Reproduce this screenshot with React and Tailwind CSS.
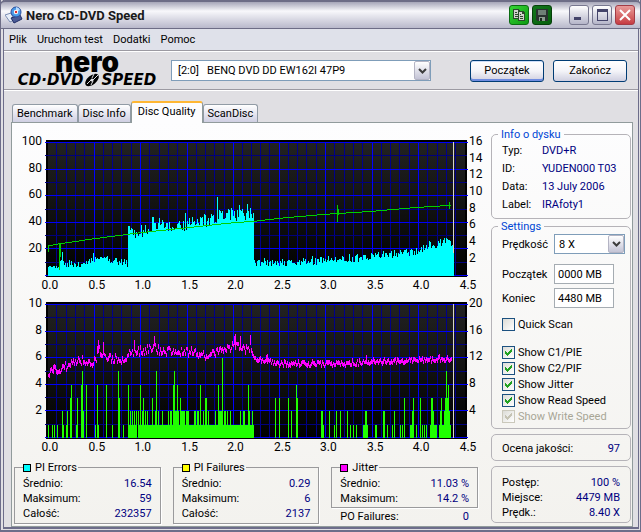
import React, { useState } from 'react';

const PLOT = { left: 36, top: 10, width: 419, height: 134 };
const BASE = PLOT.top + PLOT.height;
const X_LABELS = ['0.0', '0.5', '1.0', '1.5', '2.0', '2.5', '3.0', '3.5', '4.0', '4.5'];

// [x, height] control points, all in chart pixels
const PIE_SHAPE = [
    [36, 9], [50, 11], [70, 12], [85, 16], [100, 15], [115, 12], [116, 43], [130, 43], [148, 52],
    [160, 47], [185, 53], [205, 56], [220, 60], [235, 59], [242, 58], [243, 13], [280, 13],
    [320, 15], [345, 17], [370, 20], [400, 23], [415, 27], [434, 34], [441, 31], [442, 23],
];
const PIE_PEAKS = {
    50: 24, 81: 23, 116: 50, 140: 59, 141: 59, 147: 58, 173: 63, 189: 58, 205: 79, 207: 66, 208: 65,
    216: 67, 217: 66, 219: 68, 227: 71, 228: 66, 235: 72, 239: 68, 240: 62, 301: 20, 338: 22, 418: 35,
    419: 34, 432: 36, 433: 38, 435: 38, 437: 36, 439: 35,
};

// [x, y]
const JITTER_SHAPE = [
    [36, 82], [42, 76], [48, 75], [58, 70], [72, 66], [80, 69], [84, 67], [86, 56], [93, 64],
    [103, 65], [113, 66], [118, 58], [132, 57], [141, 52], [148, 58], [175, 58], [195, 62],
    [208, 57], [223, 51], [230, 54], [236, 57], [239, 52], [242, 64], [253, 66], [266, 70],
    [318, 70], [361, 68], [408, 66], [440, 65],
];
const JITTER_TOPS = { 41: 71, 61: 64, 85: 52, 86: 46, 91: 48, 122: 46, 142: 42, 222: 42, 223: 40, 228: 42, 238: 42, 239: 41, 255: 61, 256: 60, 355: 61 };

const PIF_BARS = {
    36: 1, 40: 1, 42: 1, 45: 1, 50: 2, 51: 1, 54: 1, 55: 2, 58: 3, 59: 4, 64: 1, 65: 3, 69: 4, 70: 5,
    71: 2, 74: 4, 83: 1, 85: 4, 86: 1, 94: 4, 100: 1, 106: 5, 107: 3, 111: 1, 116: 4, 128: 4, 131: 3,
    140: 3, 144: 5, 161: 4, 162: 5, 165: 4, 168: 3, 188: 4, 193: 3, 194: 3, 206: 4, 210: 6, 236: 4,
    264: 3, 268: 3, 277: 3, 280: 2, 285: 4, 286: 3, 310: 2, 311: 2, 312: 1, 318: 2, 323: 1, 325: 2,
    329: 2, 336: 2, 339: 1, 342: 1, 345: 1, 352: 1, 353: 1, 354: 2, 355: 2, 356: 1, 364: 1, 365: 1,
    372: 2, 373: 2, 376: 1, 381: 1, 383: 2, 389: 1, 391: 1, 393: 3, 399: 1, 400: 1, 401: 2, 402: 3,
    405: 1, 409: 3, 411: 1, 413: 1, 415: 1, 419: 1, 420: 3, 421: 3, 422: 2, 423: 1, 424: 1, 425: 1,
    428: 1, 429: 2, 430: 3, 431: 1, 432: 1, 433: 2, 434: 3, 435: 5, 436: 3, 437: 4, 438: 2, 439: 1,
};

const noise = (n) => {
    const v = Math.sin(n * 127.1 + 11.7) * 43758.5453;
    return v - Math.floor(v);
};

const lerp = (shape, x) => {
    const i = shape.findIndex(([px]) => px >= x);
    if (i <= 0) return shape[0][1];
    const [x0, y0] = shape[i - 1];
    const [x1, y1] = shape[i];
    return y0 + ((y1 - y0) * (x - x0)) / (x1 - x0);
};

const range = (from, to) => Array.from({ length: to - from }, (_, i) => from + i);

const barsPath = (bars) => bars.map(([x, h]) => `M${x} ${BASE}v${-Math.round(h)}h1v${Math.round(h)}z`).join('');

const pieBars = range(36, 443).map((x) => {
    const dense = x >= 116 && x < 243;
    const spread = dense ? 13 : 8;
    return [x, PIE_PEAKS[x] || lerp(PIE_SHAPE, x) + (noise(x) - 0.4) * (x > 440 ? 0 : spread)];
});

const pifBars = range(36, 443).map((x) => {
    let v = PIF_BARS[x] || 0;
    if (!v && x >= 116 && x < 243 && x !== 125) v = noise(x * 3) > 0.62 ? 2 : 1;
    return [x, v * 13.3];
});

const jitterPath = range(36, 441).map((x) => {
    const spread = x < 242 ? 8 : 5;
    const mid = lerp(JITTER_SHAPE, x) + (noise(x + 500) - 0.5) * spread;
    const top = Math.round(JITTER_TOPS[x] || mid - 1 - noise(x + 900) * 2);
    return `M${x} ${top}h1V${Math.round(mid + 2)}h-1z`;
}).join('');

const Chart = ({ id, title, left, right, children }) => (
    <svg viewBox="0 0 476 162" className="block w-full" role="img" aria-label={title} shapeRendering="crispEdges">
        <defs>
            <linearGradient id={id} x1="0" y1="0" x2="0" y2="1">
                <stop offset="0" stopColor="#222222" />
                <stop offset="1" stopColor="#000000" />
            </linearGradient>
        </defs>
        <rect x="34" y="8" width="422" height="137" fill="#000000" />
        <rect x="36" y="10" width="418" height="134" fill={`url(#${id})`} />

        {range(1, 45).map((i) => i % 5 !== 0 && (
            <rect key={i} x={Math.round(35 + i * 9.3)} y="10" width="1" height="134" fill="#00008b" />
        ))}
        {range(0, 11).map((i) => (
            <rect key={i} x="33" y={Math.round(10 + i * 13.3)} width={i % 2 ? 423 : 424} height="1" fill={i % 2 ? '#00007c' : '#0000f8'} />
        ))}
        {range(1, 9).map((i) => (
            <rect key={i} x={Math.round(35 + i * 46.5)} y="10" width="1" height="134" fill="#0000ff" />
        ))}
        <rect x="442" y="10" width="1" height="134" fill="#d8d4c8" />
        {children}

        <g className="font-[Roboto,sans-serif] text-[12px]" fill="#000000" shapeRendering="auto">
            {left.map((t, i) => (
                <text key={t} x="30" y={Math.round(13 + i * 26.7)} textAnchor="end">{t}</text>
            ))}
            {right.map((t, i) => (
                <text key={t} x="458" y={Math.round(13 + (i * 133.5) / right.length)}>{t}</text>
            ))}
            {X_LABELS.map((t, i) => (
                <text key={t} x={Math.round(38 + i * 46.5)} y="157" textAnchor="middle">{t}</text>
            ))}
        </g>
    </svg>
);

const GroupBox = ({ legend, className, children }) => (
    <fieldset className={`min-w-0 rounded-[5px] border border-[#b5b3b8] ${className}`}>
        {legend && <legend className="-ml-1 px-[3px] text-[#0046d5]">{legend}</legend>}
        {children}
    </fieldset>
);

const Row = ({ label, value }) => (
    <div className="flex justify-between">
        <dt>{label}</dt>
        <dd className="text-[#000080]">{value}</dd>
    </div>
);

const StatBox = ({ color, title, rows }) => (
    <fieldset className="min-w-0 border border-[#9a9a9c] px-2 pb-px shadow-[1px_1px_0_#ffffff]">
        <legend className="flex items-center gap-1 pr-px">
            <span className={`size-2 border border-black ${color}`} />
            {title}
        </legend>
        <dl className="pt-px">
            {rows.map(([label, value]) => <Row key={label} label={label} value={value} />)}
        </dl>
    </fieldset>
);

const Arrow = () => (
    <span className="pointer-events-none absolute inset-y-px right-px flex w-4 items-center justify-center rounded-[2px] border border-[#b4b4c4] bg-linear-to-b from-white to-[#c4c4d6]">
        <svg viewBox="0 0 9 6" className="w-[9px]" fill="none" stroke="#3c3c3c" strokeWidth="2">
            <path d="M1 1l3.500 3.500L8 1" />
        </svg>
    </span>
);

const Check = ({ label, checked, onChange, disabled }) => (
    <label className={`flex h-4 items-center gap-[3px] ${disabled ? 'text-[#a8a696]' : ''}`}>
        <span className="grid">
            <input
                type="checkbox"
                checked={checked}
                onChange={onChange}
                disabled={disabled}
                className="peer col-start-1 row-start-1 size-[13px] appearance-none border border-[#1c5180] bg-linear-to-br from-[#dcdcd7] to-white disabled:border-[#cac8bb]"
            />
            <svg viewBox="0 0 13 13" className="pointer-events-none invisible col-start-1 row-start-1 size-[13px] peer-checked:visible" fill={disabled ? '#c5c3b4' : '#21a121'} shapeRendering="crispEdges">
                <path d="M3 5h1v1h1v1h1v-1h1v-1h1v-1h1v-1h1v3h-1v1h-1v1h-1v1h-1v1h-1v-1h-1v-1h-1z" />
            </svg>
        </span>
        {label}
    </label>
);

const TABS = ['Benchmark', 'Disc Info', 'Disc Quality', 'ScanDisc'];
const titleButton = 'flex size-5 items-center justify-center rounded-[3px] border';
const pushButton = 'h-[22px] w-[74px] rounded-[3px] border border-[#003c74] bg-linear-to-b from-white via-[#f4f4f8] to-[#cfcfe0]';

const App = () => {
    const [tab, setTab] = useState('Disc Quality');
    const [show, setShow] = useState({ quick: false, pie: true, pif: true, jitter: true, read: true });
    const toggle = (key) => () => setShow({ ...show, [key]: !show[key] });

    return (
        <div className="flex min-h-screen flex-col border-r-3 border-b-[5px] border-l-4 border-double border-[#6d6d8a] bg-[#e0dfe3] font-[Roboto,sans-serif] text-[11px] leading-[15px] text-black">
            {/* Title bar */}
            <header className="-mr-[3px] -ml-1 flex h-[29px] items-center rounded-t-[5px] border-x border-t-2 border-b border-[#6d6d86] bg-linear-to-b from-[#a6a6b8] via-[#f8f8fb] via-35% to-[#b9b9cb] pr-[5px] pl-1">
                <svg viewBox="0 0 18 18" className="mr-[3px] size-[18px]">
                    <path d="M0 9l6-2 3 7-4 2z" fill="#e8eef8" stroke="#7c8eb4" />
                    <path d="M6 12l9-3 2 4-8 4z" fill="#4a5a96" stroke="#1f2d66" />
                    <circle cx="11" cy="6" r="5" fill="#4a9be8" stroke="#2a4c9c" />
                    <path d="M11 1a5 5 0 0 1 4 3l-4 2z" fill="#b8dcff" />
                    <circle cx="11" cy="6" r="2.2" fill="#ffffff" />
                    <circle cx="11" cy="6" r="1.2" fill="#dc2828" />
                </svg>
                <h1 className="flex-1 text-[13px] font-bold text-[#1a1a1a]">Nero CD-DVD Speed</h1>
                <div className="flex items-center gap-[3px]">
                    <button type="button" aria-label="Copy" className={`${titleButton} border-[#0b6b12] bg-linear-to-br from-[#35d535] to-[#0a9a12]`}>
                        <svg viewBox="0 0 14 14" className="size-[14px]" shapeRendering="crispEdges">
                            <path d="M1 1h5l2 2v8H1z" fill="#2b4a2b" />
                            <path d="M2 2h4v2h1v6H2z" fill="#d2d2cc" />
                            <path d="M3 4h2v1H3zM3 6h3v1H3zM3 8h3v1H3z" fill="#2b4a2b" />
                            <path d="M6 3h5l2 2v8H6z" fill="#2b4a2b" />
                            <path d="M7 4h3v2h2v6H7z" fill="#d2d2cc" />
                            <path d="M8 6h1v1H8zM8 8h3v1H8zM8 10h3v1H8z" fill="#2b4a2b" />
                        </svg>
                    </button>
                    <button type="button" aria-label="Save" className={`${titleButton} border-[#06400a] bg-linear-to-br from-[#12761c] to-[#07600d]`}>
                        <svg viewBox="0 0 14 14" className="size-[14px]" shapeRendering="crispEdges">
                            <path d="M1 1h12v12H2l-1-1z" fill="#2a3230" />
                            <path d="M3 2h8v5H3z" fill="#6f7f76" />
                            <path d="M4 9h6v4H4z" fill="#8b9b8f" />
                            <path d="M5 10h2v3H5z" fill="#1c2a20" />
                        </svg>
                    </button>
                    <button type="button" aria-label="Minimize" className={`${titleButton} ml-[14px] border-[#77778f] bg-linear-to-b from-white to-[#b5b5c9]`}>
                        <svg viewBox="0 0 14 14" className="size-[14px]"><path d="M2 9h7v3H2z" fill="#44446a" /></svg>
                    </button>
                    <button type="button" aria-label="Maximize" className={`${titleButton} border-[#77778f] bg-linear-to-b from-white to-[#b5b5c9]`}>
                        <svg viewBox="0 0 14 14" className="size-[14px]"><path d="M2 1h11v12H2zM3 4v8h9V4z" fill="#44446a" fillRule="evenodd" /></svg>
                    </button>
                    <button type="button" aria-label="Close" className={`${titleButton} border-[#a23c46] bg-linear-to-b from-[#e89a9a] to-[#c63a42]`}>
                        <svg viewBox="0 0 14 14" className="size-[14px]" stroke="#ffffff" strokeWidth="2"><path d="M2 2l10 10M12 2L2 12" /></svg>
                    </button>
                </div>
            </header>

            {/* Menu */}
            <nav className="flex h-[22px] items-center gap-[10px] border-b border-[#9c9aa2] bg-[#dfe1ea] px-[5px]">
                <a href="#plik">Plik</a>
                <a href="#test">Uruchom test</a>
                <a href="#dodatki">Dodatki</a>
                <a href="#pomoc">Pomoc</a>
            </nav>

            {/* Toolbar */}
            <div className="flex h-[39px] items-center border-t border-b border-t-white border-b-[#9c9aa2] pr-[11px] pl-[10px]">
                <div className="mr-[11px] flex w-[146px] flex-col items-center" aria-label="Nero CD-DVD Speed">
                    <span className="font-[Inter,sans-serif] text-[28px] leading-[18px] font-black">nero</span>
                    <span className="flex items-center font-['DejaVu_Sans',sans-serif] text-[15px] leading-[18px] font-bold italic">
                        CD·DVD
                        <svg viewBox="0 0 18 14" className="w-[18px]">
                            <ellipse cx="9" cy="7" rx="8" ry="4.5" transform="rotate(-40 9 7)" fill="#000000" />
                            <path d="M4 11l4-4M10 7l5-5M8 12l2-4M9 5l2-4" stroke="#e0dfe3" />
                            <circle cx="9" cy="7" r="1.5" fill="#e0dfe3" />
                        </svg>
                        SPEED
                    </span>
                </div>
                <div className="relative max-w-[260px] flex-1">
                    <select aria-label="Drive" className="block h-[21px] w-full appearance-none border border-[#7f9db9] bg-white px-[6px]">
                        <option>[2:0] &nbsp; BENQ DVD DD EW162I 47P9</option>
                    </select>
                    <Arrow />
                </div>
                <div className="ml-auto flex gap-[9px]">
                    <button type="button" className={`${pushButton} shadow-[inset_0_-2px_0_#6f8ce0,inset_0_1px_0_#cdddf8]`}>Początek</button>
                    <button type="button" className={pushButton}>Zakończ</button>
                </div>
            </div>

            {/* Tabs */}
            <main className="flex flex-1 flex-col border-t border-white pt-[10px] pr-[5px] pl-[7px]">
                <div role="tablist" className="flex items-end px-px">
                    {TABS.map((name) => (
                        <button
                            key={name}
                            type="button"
                            role="tab"
                            aria-selected={tab === name}
                            onClick={() => setTab(name)}
                            className={tab === name
                                ? 'z-10 -mb-px h-[22px] rounded-t-[3px] border-x border-t-2 border-x-[#919b9c] border-t-[#ffb733] bg-[#fdfdfe] px-[6px] pb-[3px]'
                                : 'h-[18px] rounded-t-[3px] border border-b-0 border-[#919ba5] bg-linear-to-b from-white to-[#cfcfe2] px-1'}
                        >
                            {name}
                        </button>
                    ))}
                </div>

                <div role="tabpanel" className="flex flex-1 gap-1 border border-[#919b9c] bg-linear-to-b from-[#fdfdfe] to-[#f3f2ee] pr-px">
                    <div className="min-w-0 flex-1 pt-[9px]">
                        <Chart id="pieBg" title="PI Errors" left={['100', '80', '60', '40', '20']} right={['16', '14', '12', '10', '8', '6', '4', '2']}>
                            {show.pie && <path d={barsPath(pieBars)} fill="#00ffff" />}
                            {show.read && (
                                <path d="M36.5 120v-6L48 112 82 107 128 101 175 96 221 91 243 89.500 268 86.500 314 82.500 361 79.500 407 75.500 440 73.500M47.500 112v26M48.500 112v13M326.500 73v17M327.500 77v6M438.500 70v7" fill="none" stroke="#00d000" />
                            )}
                        </Chart>
                        <Chart id="pifBg" title="PI Failures" left={['10', '8', '6', '4', '2']} right={['20', '16', '12', '8', '4']}>
                            {show.pif && <path d={barsPath(pifBars)} fill="#20ff00" />}
                            {show.jitter && <path d={jitterPath} fill="#ff00ff" />}
                        </Chart>

                        <div className="grid grid-cols-3 gap-x-3 pt-[5px] pr-[9px] pl-[2px]">
                            <StatBox color="bg-[#00ffff]" title="PI Errors" rows={[['Średnio:', '16.54'], ['Maksimum:', '59'], ['Całość:', '232357']]} />
                            <StatBox color="bg-[#ffff00]" title="PI Failures" rows={[['Średnio:', '0.29'], ['Maksimum:', '6'], ['Całość:', '2137']]} />
                            <div>
                                <StatBox color="bg-[#ff00ff]" title="Jitter" rows={[['Średnio:', '11.03 %'], ['Maksimum:', '14.2 %']]} />
                                <dl className="px-[9px] pt-px">
                                    <Row label="PO Failures:" value="0" />
                                </dl>
                            </div>
                        </div>
                    </div>

                    <div className="flex w-[140px] flex-col pt-1">
                        <GroupBox legend="Info o dysku" className="h-[92px] px-[10px]">
                            <dl className="grid grid-cols-[40px_1fr] leading-[18px] whitespace-nowrap">
                                <dt>Typ:</dt><dd className="text-[#000080]">DVD+R</dd>
                                <dt>ID:</dt><dd className="text-[#000080]">YUDEN000 T03</dd>
                                <dt>Data:</dt><dd className="text-[#000080]">13 July 2006</dd>
                                <dt>Label:</dt><dd className="text-[#000080]">IRAfoty1</dd>
                            </dl>
                        </GroupBox>

                        <GroupBox legend="Settings" className="h-[210px] pr-[5px] pl-[10px]">
                            <div className="grid grid-cols-[52px_1fr] items-center">
                                <label htmlFor="speed">Prędkość</label>
                                <div className="relative">
                                    <select id="speed" className="block h-5 w-full appearance-none border border-[#7f9db9] bg-white px-1">
                                        <option>8 X</option>
                                    </select>
                                    <Arrow />
                                </div>
                                <label htmlFor="start" className="mt-[10px]">Początek</label>
                                <input id="start" defaultValue="0000 MB" className="mt-[10px] h-5 w-[60px] border border-[#a5acb2] bg-white px-[3px]" />
                                <label htmlFor="end" className="mt-1">Koniec</label>
                                <input id="end" defaultValue="4480 MB" className="mt-1 h-5 w-[60px] border border-[#a5acb2] bg-white px-[3px]" />
                            </div>
                            <div className="mt-2 flex flex-col">
                                <Check label="Quick Scan" checked={show.quick} onChange={toggle('quick')} />
                                <div className="h-3" />
                                <Check label="Show C1/PIE" checked={show.pie} onChange={toggle('pie')} />
                                <Check label="Show C2/PIF" checked={show.pif} onChange={toggle('pif')} />
                                <Check label="Show Jitter" checked={show.jitter} onChange={toggle('jitter')} />
                                <Check label="Show Read Speed" checked={show.read} onChange={toggle('read')} />
                                <Check label="Show Write Speed" checked readOnly disabled />
                            </div>
                        </GroupBox>

                        <GroupBox className="mt-[5px] h-[27px] px-[10px] pt-[6px]">
                            <dl><Row label="Ocena jakości:" value="97" /></dl>
                        </GroupBox>

                        <GroupBox className="mt-[5px] h-[57px] px-[10px] pt-2">
                            <dl>
                                <Row label="Postęp:" value="100 %" />
                                <Row label="Miejsce:" value="4479 MB" />
                                <Row label="Prędk.:" value="8.40 X" />
                            </dl>
                        </GroupBox>
                    </div>
                </div>
            </main>
        </div>
    );
};

export default App;
